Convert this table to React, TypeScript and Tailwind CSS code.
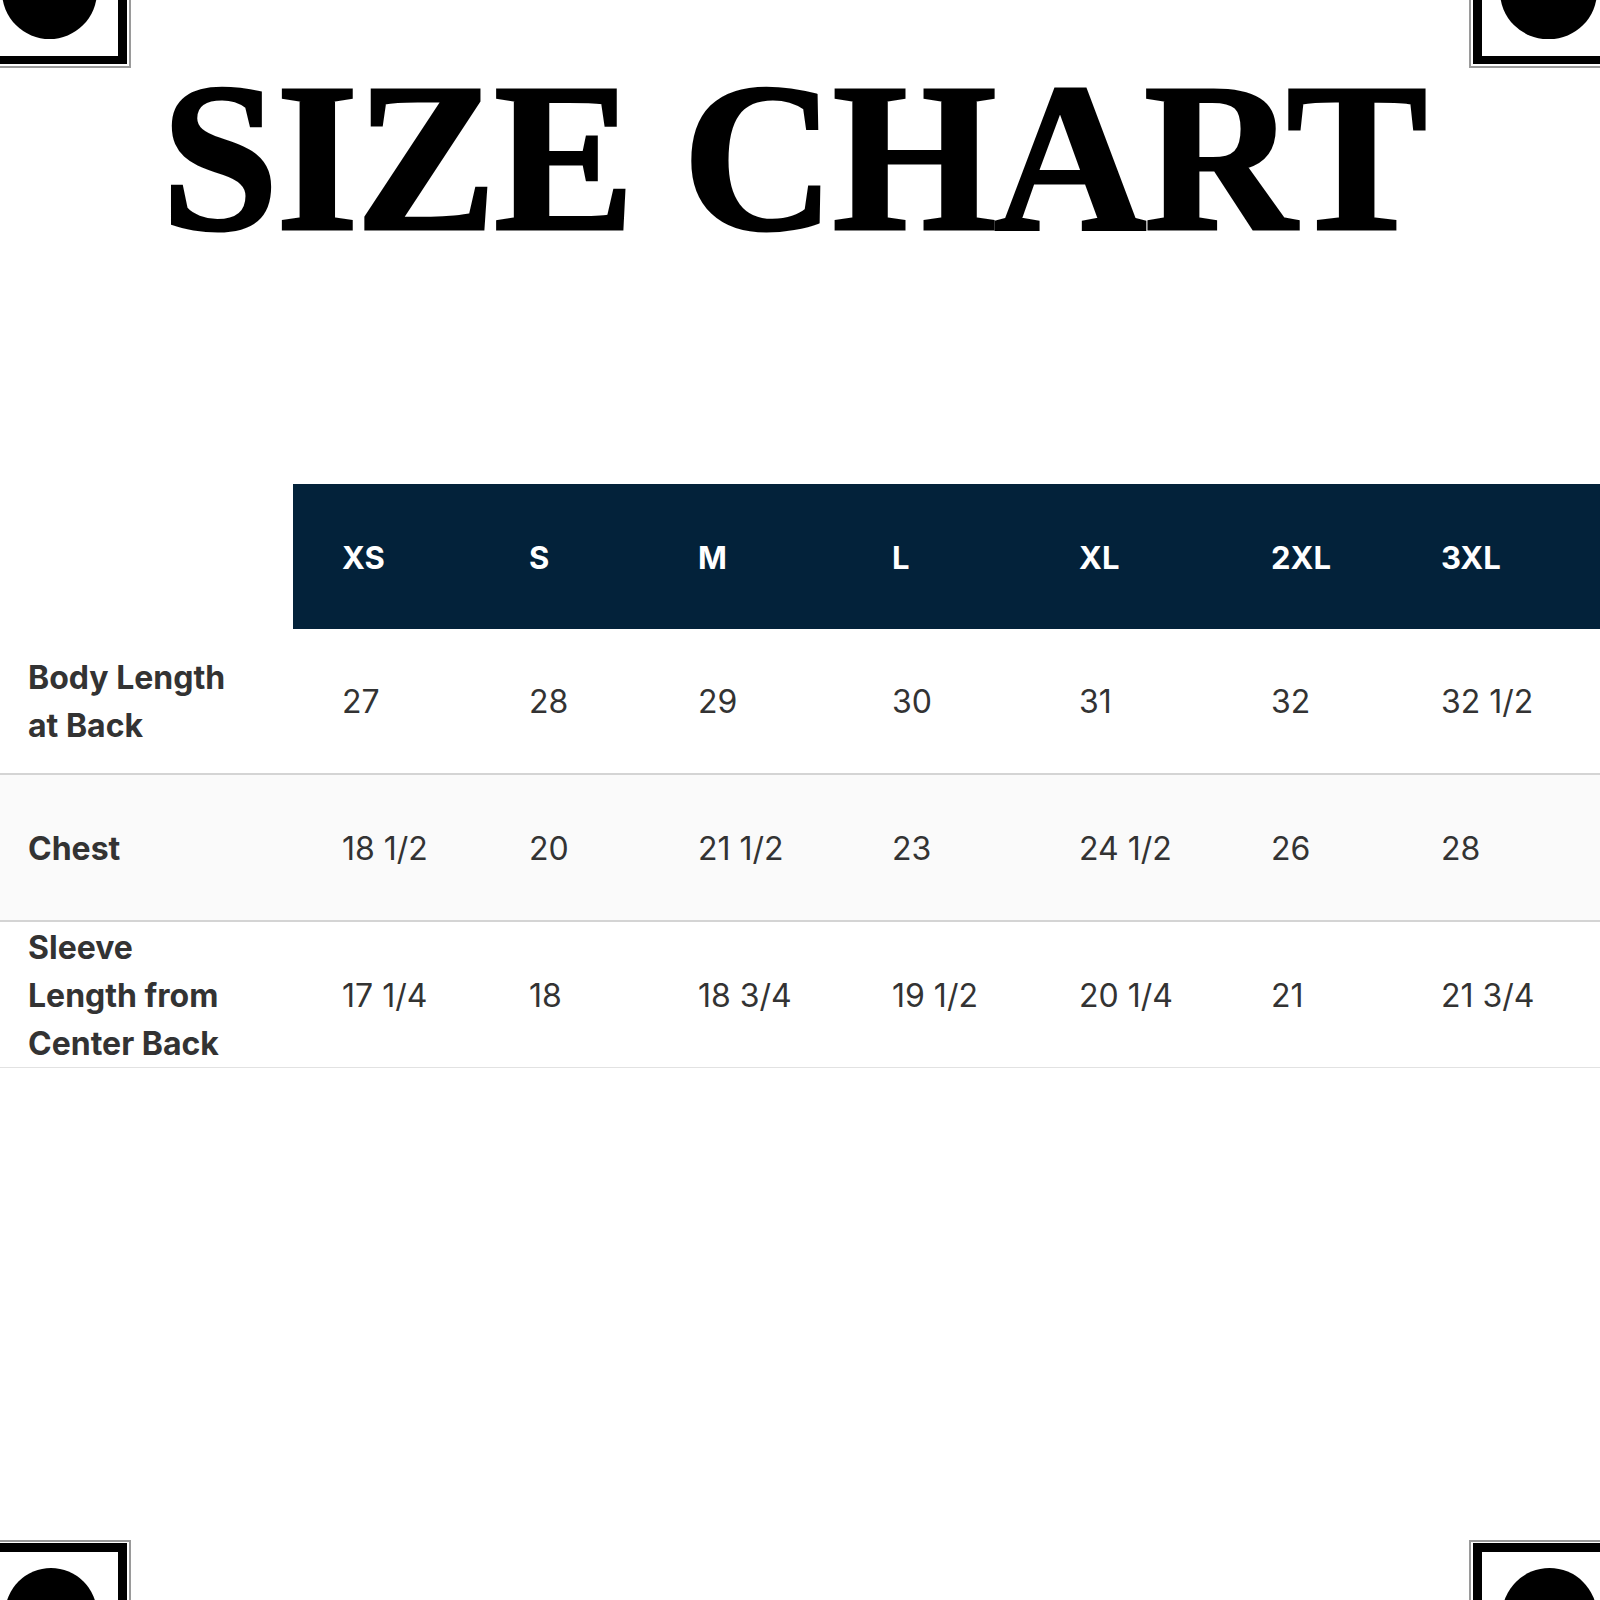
import type { ReactNode } from 'react';

const SIZES = ['XS', 'S', 'M', 'L', 'XL', '2XL', '3XL'];

interface Row {
    label: ReactNode;
    values: string[];
    shaded?: boolean;
    border: string;
}

const ROWS: Row[] = [
    {
        label: <>Body Length<br />at Back</>,
        values: ['27', '28', '29', '30', '31', '32', '32 1/2'],
        border: 'border-b-2 border-[#d4d4d4] h-[146px]',
    },
    {
        label: 'Chest',
        values: ['18 1/2', '20', '21 1/2', '23', '24 1/2', '26', '28'],
        shaded: true,
        border: 'border-b-2 border-[#d4d4d4] h-[147px]',
    },
    {
        label: <>Sleeve<br />Length from<br />Center Back</>,
        values: ['17 1/4', '18', '18 3/4', '19 1/2', '20 1/4', '21', '21 3/4'],
        border: 'border-b border-[#e2e2e2] h-[146px]',
    },
];

const GRID = 'grid grid-cols-[293px_187px_169px_194px_187px_192px_170px_1fr]';

// corner ornament: black disc inside a double-ruled frame
function Corner({ pos }: { pos: 'tl' | 'tr' | 'bl' | 'br' }) {
    if (pos === 'tl') {
        return (
            <>
                <div className="absolute left-[-10px] top-[-10px] w-[141px] h-[78px] border-r-2 border-b-2 border-[#9a9a9a]" />
                <div className="absolute left-[-10px] top-[-10px] w-[137px] h-[74px] border-r-[9px] border-b-[8px] border-black" />
                <div className="absolute left-[2px] top-[-56px] w-[95px] h-[95px] rounded-full bg-black" />
            </>
        );
    }
    if (pos === 'tr') {
        return (
            <>
                <div className="absolute right-[-10px] top-[-10px] w-[141px] h-[78px] border-l-2 border-b-2 border-[#9a9a9a]" />
                <div className="absolute right-[-10px] top-[-10px] w-[137px] h-[74px] border-l-[9px] border-b-[8px] border-black" />
                <div className="absolute right-[3px] top-[-56px] w-[97px] h-[95px] rounded-full bg-black" />
            </>
        );
    }
    if (pos === 'bl') {
        return (
            <>
                <div className="absolute left-[-10px] bottom-[-10px] w-[141px] h-[70px] border-r-2 border-t-2 border-[#9a9a9a]" />
                <div className="absolute left-[-10px] bottom-[-10px] w-[137px] h-[67px] border-r-[9px] border-t-[9px] border-black" />
                <div className="absolute left-[5px] bottom-[-63px] w-[92px] h-[95px] rounded-full bg-black" />
            </>
        );
    }
    return (
        <>
            <div className="absolute right-[-10px] bottom-[-10px] w-[141px] h-[70px] border-l-2 border-t-2 border-[#9a9a9a]" />
            <div className="absolute right-[-10px] bottom-[-10px] w-[137px] h-[67px] border-l-[9px] border-t-[9px] border-black" />
            <div className="absolute right-[3px] bottom-[-63px] w-[95px] h-[95px] rounded-full bg-black" />
        </>
    );
}

export default function App() {
    return (
        <div className="relative w-[1600px] h-[1600px] bg-white overflow-hidden">
            <Corner pos="tl" />
            <Corner pos="tr" />
            <Corner pos="bl" />
            <Corner pos="br" />

            {/* Title */}
            <h1 className="pt-[53px] pr-[14px] text-center text-black font-bold text-[211px] leading-none tracking-[-2.5px] font-['Liberation_Serif',serif] [-webkit-text-stroke:3px_black]">
                SIZE CHART
            </h1>

            {/* Table */}
            <div className="mt-[220px] font-['Inter',sans-serif]">
                <div className={`${GRID} h-[145px] items-stretch`}>
                    <div />
                    {SIZES.map(s => (
                        <div key={s} className="bg-[#03223a] flex items-center pl-[49px] pt-[3px] text-white font-bold text-[31px]">
                            {s}
                        </div>
                    ))}
                </div>

                {ROWS.map((row, i) => (
                    <div key={i} className={`${GRID} items-center pt-[2px] ${row.border} ${row.shaded ? 'bg-[#fafafa]' : 'bg-white'}`}>
                        <div className="pl-[28px] font-bold text-[32px] leading-[48px] text-[#333333]">
                            {row.label}
                        </div>
                        {row.values.map((v, j) => (
                            <div key={j} className="pl-[49px] text-[32px] text-[#333333] whitespace-nowrap">
                                {v}
                            </div>
                        ))}
                    </div>
                ))}
            </div>
        </div>
    );
}
